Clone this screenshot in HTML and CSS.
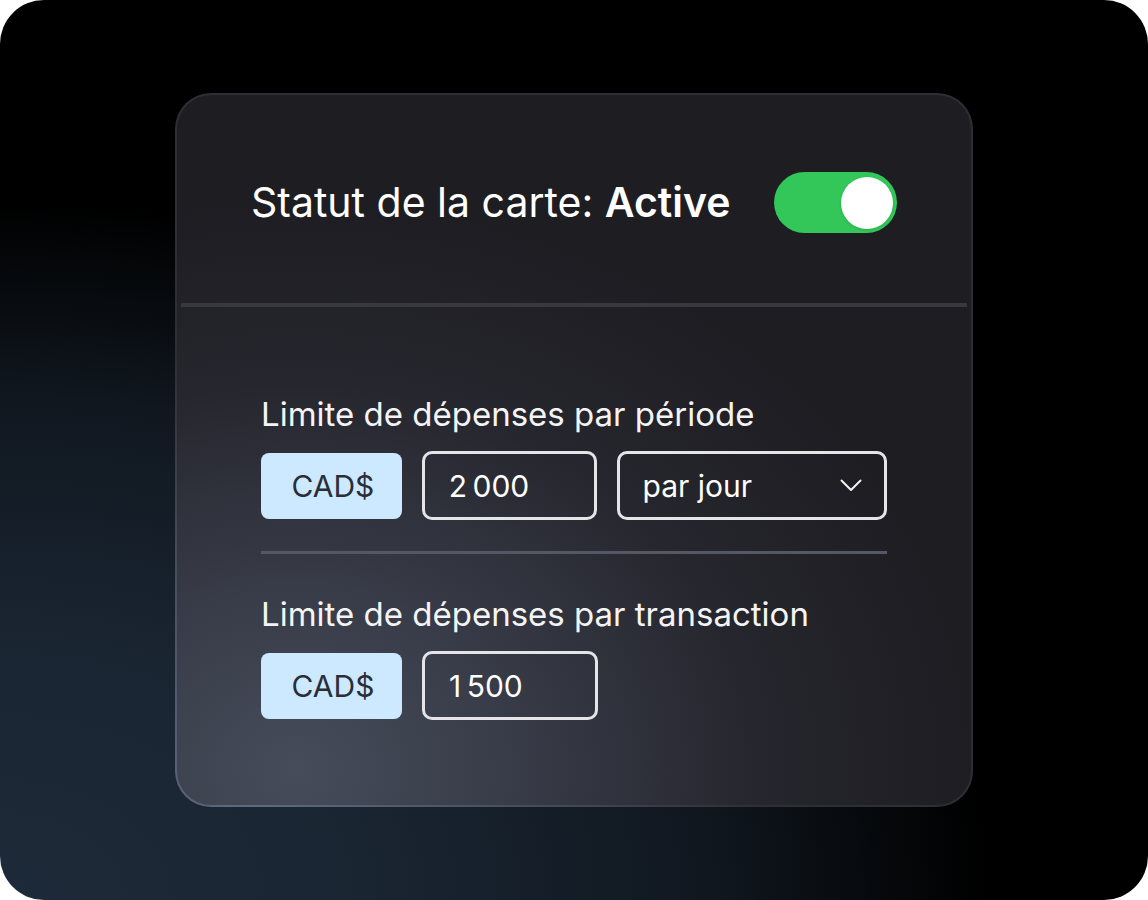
FILE: index.html
```html
<!DOCTYPE html>
<html lang="fr">
<head>
<meta charset="utf-8">
<title>Statut de la carte</title>
<link rel="stylesheet" href="styles.css">
</head>
<body>
<div class="frame">
  <div class="card">
    <div class="card-header">
      <div class="status">Statut de la carte: <strong>Active</strong></div>
      <div class="toggle" role="switch" aria-checked="true"><span class="knob"></span></div>
    </div>
    <div class="header-divider"></div>
    <div class="card-body">
      <div class="section">
        <div class="label">Limite de dépenses par période</div>
        <div class="row">
          <div class="chip">CAD$</div>
          <div class="field amount">2&#8239;000</div>
          <div class="field select">
            <span>par jour</span>
            <svg class="chevron" width="22" height="13" viewBox="0 0 22 13" fill="none">
              <polyline points="1.5,1.5 11,11 20.5,1.5" stroke="#f2f2f2" stroke-width="2" stroke-linecap="round" stroke-linejoin="round"/>
            </svg>
          </div>
        </div>
      </div>
      <div class="section-divider"></div>
      <div class="section second">
        <div class="label">Limite de dépenses par transaction</div>
        <div class="row">
          <div class="chip">CAD$</div>
          <div class="field amount">1&#8239;500</div>
        </div>
      </div>
    </div>
  </div>
</div>
</body>
</html>
```
FILE: styles.css
```css
* { box-sizing: border-box; }
html, body { margin: 0; padding: 0; background: #ffffff; }
body { font-family: Inter, "Noto Sans", sans-serif; }

.frame {
  width: 1148px;
  height: 900px;
  border-radius: 44px;
  overflow: hidden;
  display: flex;
  align-items: center;
  justify-content: center;
  background:
    radial-gradient(ellipse 100% 90% at 0% 100%, #1d2a39 0%, #1a2532 32%, #10171f 62%, #000000 86%);
}

.card {
  width: 798px;
  border: 2px solid transparent;
  border-radius: 36px;
  background:
    radial-gradient(ellipse 85% 80% at 15% 95%, #464c5a 0%, #383c48 32%, #26262e 68%, #1e1d22 100%) padding-box,
    radial-gradient(ellipse 80% 80% at 10% 100%, #5f6a7e 0%, #464c5a 45%, #2e2e34 80%) border-box;
  display: flex;
  flex-direction: column;
}

.card-header {
  height: 208px;
  padding: 77px 74px 70px 74px;
  display: flex;
  align-items: center;
  justify-content: space-between;
}

.status {
  color: #ffffff;
  font-size: 41px;
  line-height: 61px;
  font-weight: 400;
}
.status strong { font-weight: 600; }

.toggle {
  width: 123px;
  height: 61px;
  border-radius: 31px;
  background: #33c759;
  padding: 4px;
  display: flex;
  align-items: center;
  justify-content: flex-end;
}
.knob {
  width: 52px;
  height: 52px;
  border-radius: 50%;
  background: #ffffff;
  box-shadow: 0 1px 3px rgba(0,0,0,0.15);
}

.header-divider {
  height: 4px;
  margin: 0 4px;
  background: #38393e;
}

.card-body {
  padding: 88px 84px 85px 84px;
  display: flex;
  flex-direction: column;
}

.label {
  color: #f4f4f5;
  font-size: 33px;
  line-height: 38px;
  margin-bottom: 18px;
}

.row {
  display: flex;
  align-items: center;
  gap: 20px;
  height: 69px;
}

.chip {
  width: 141px;
  height: 66px;
  border-radius: 8px;
  background: #cce9ff;
  color: #2a2e37;
  font-size: 30px;
  display: flex;
  align-items: center;
  justify-content: center;
  padding-left: 3px;
}

.field {
  height: 69px;
  border: 3px solid #e5e5e7;
  border-radius: 10px;
  color: #ffffff;
  font-size: 30px;
  display: flex;
  align-items: center;
  padding: 0 24px;
}
.amount { width: 176px; }
.select {
  width: 270px;
  justify-content: space-between;
  padding: 0 22px 0 22px;
}
.chevron { display: block; }

.section-divider {
  height: 3px;
  background: #535864;
  margin-top: 31px;
  margin-bottom: 41px;
}
```
